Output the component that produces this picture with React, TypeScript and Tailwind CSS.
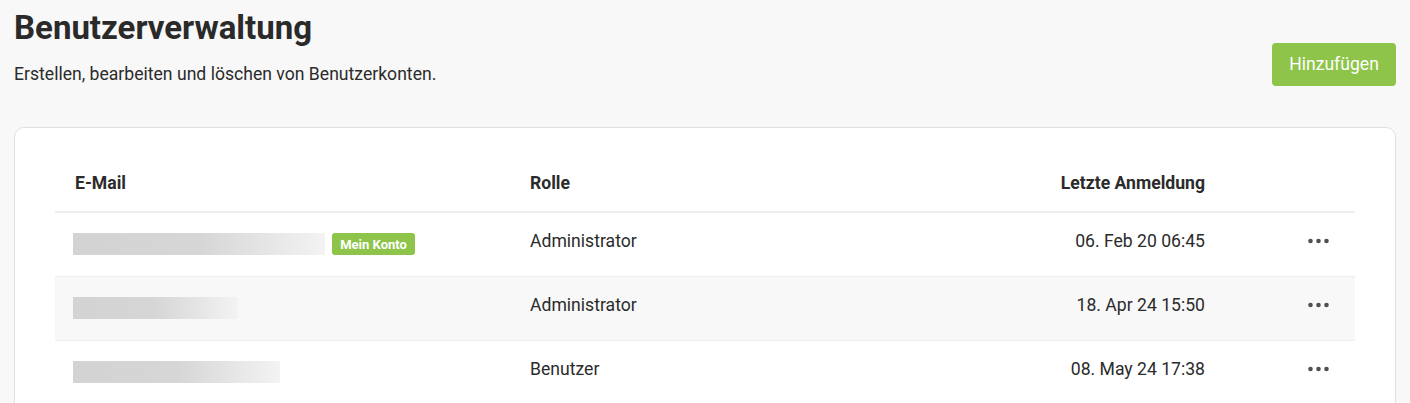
const users = [
  { email: 252, mine: true, role: "Administrator", last: "06. Feb 20 06:45" },
  { email: 165, mine: false, role: "Administrator", last: "18. Apr 24 15:50" },
  { email: 207, mine: false, role: "Benutzer", last: "08. May 24 17:38" },
];

function Dots() {
  return (
    <svg width="21" height="6" viewBox="0 0 21 6" className="fill-[#505050]">
      <circle cx="2.5" cy="3" r="2.3" />
      <circle cx="10.5" cy="3" r="2.3" />
      <circle cx="18.5" cy="3" r="2.3" />
    </svg>
  );
}

export default function App() {
  return (
    <div className="min-h-screen bg-[#f8f8f8] px-[14px] pt-[8px] font-['Roboto',sans-serif] text-[#2b2b2b]">
      {/* Header */}
      <div className="flex items-start justify-between">
        <div>
          <h1 className="text-[33px] font-bold leading-[40px] text-[#2a2a2a]">
            Benutzerverwaltung
          </h1>
          <p className="mt-[14px] text-[17.6px] leading-[24px]">
            Erstellen, bearbeiten und löschen von Benutzerkonten.
          </p>
        </div>
        <button className="mt-[35px] h-[43px] w-[124px] rounded-[4px] bg-[#8dc449] text-[17.6px] text-white">
          Hinzufügen
        </button>
      </div>

      {/* Card */}
      <div className="mt-[41px] rounded-[10px] border border-[#e0e0e0] bg-white px-[40px] pb-[40px]">
        <table className="w-full border-collapse text-[17.6px]">
          <thead>
            <tr className="border-b-2 border-[#eeeeee] text-left leading-[24px]">
              <th className="w-[455px] px-[20px] pt-[43px] pb-[16px] font-bold">E-Mail</th>
              <th className="px-[20px] pt-[43px] pb-[16px] font-bold">Rolle</th>
              <th className="px-[20px] pt-[43px] pb-[16px] text-right font-bold">
                Letzte Anmeldung
              </th>
              <th className="w-[130px]"></th>
            </tr>
          </thead>
          <tbody>
            {users.map((u, i) => (
              <tr
                key={i}
                className={`h-[64px] border-b border-[#eeeeee] ${i % 2 === 1 ? "bg-[#f8f8f8]" : "bg-white"}`}
              >
                <td className="pl-[18px] pr-[20px]">
                  <div className="flex items-center gap-[7px]">
                    <div
                      className="h-[22px] bg-gradient-to-r from-[#d3d3d3] via-[#d6d6d6] to-[#f3f3f3]"
                      style={{ width: u.email }}
                    />
                    {u.mine && (
                      <span className="flex h-[22px] w-[83px] items-center justify-center rounded-[3px] bg-[#8dc449] text-[13px] font-bold text-white">
                        Mein Konto
                      </span>
                    )}
                  </div>
                </td>
                <td className="px-[20px] pb-[6px]">{u.role}</td>
                <td className="px-[20px] pb-[6px] text-right">{u.last}</td>
                <td className="pb-[6px]">
                  <div className="flex justify-end pr-[26px]">
                    <Dots />
                  </div>
                </td>
              </tr>
            ))}
          </tbody>
        </table>
      </div>
    </div>
  );
}
